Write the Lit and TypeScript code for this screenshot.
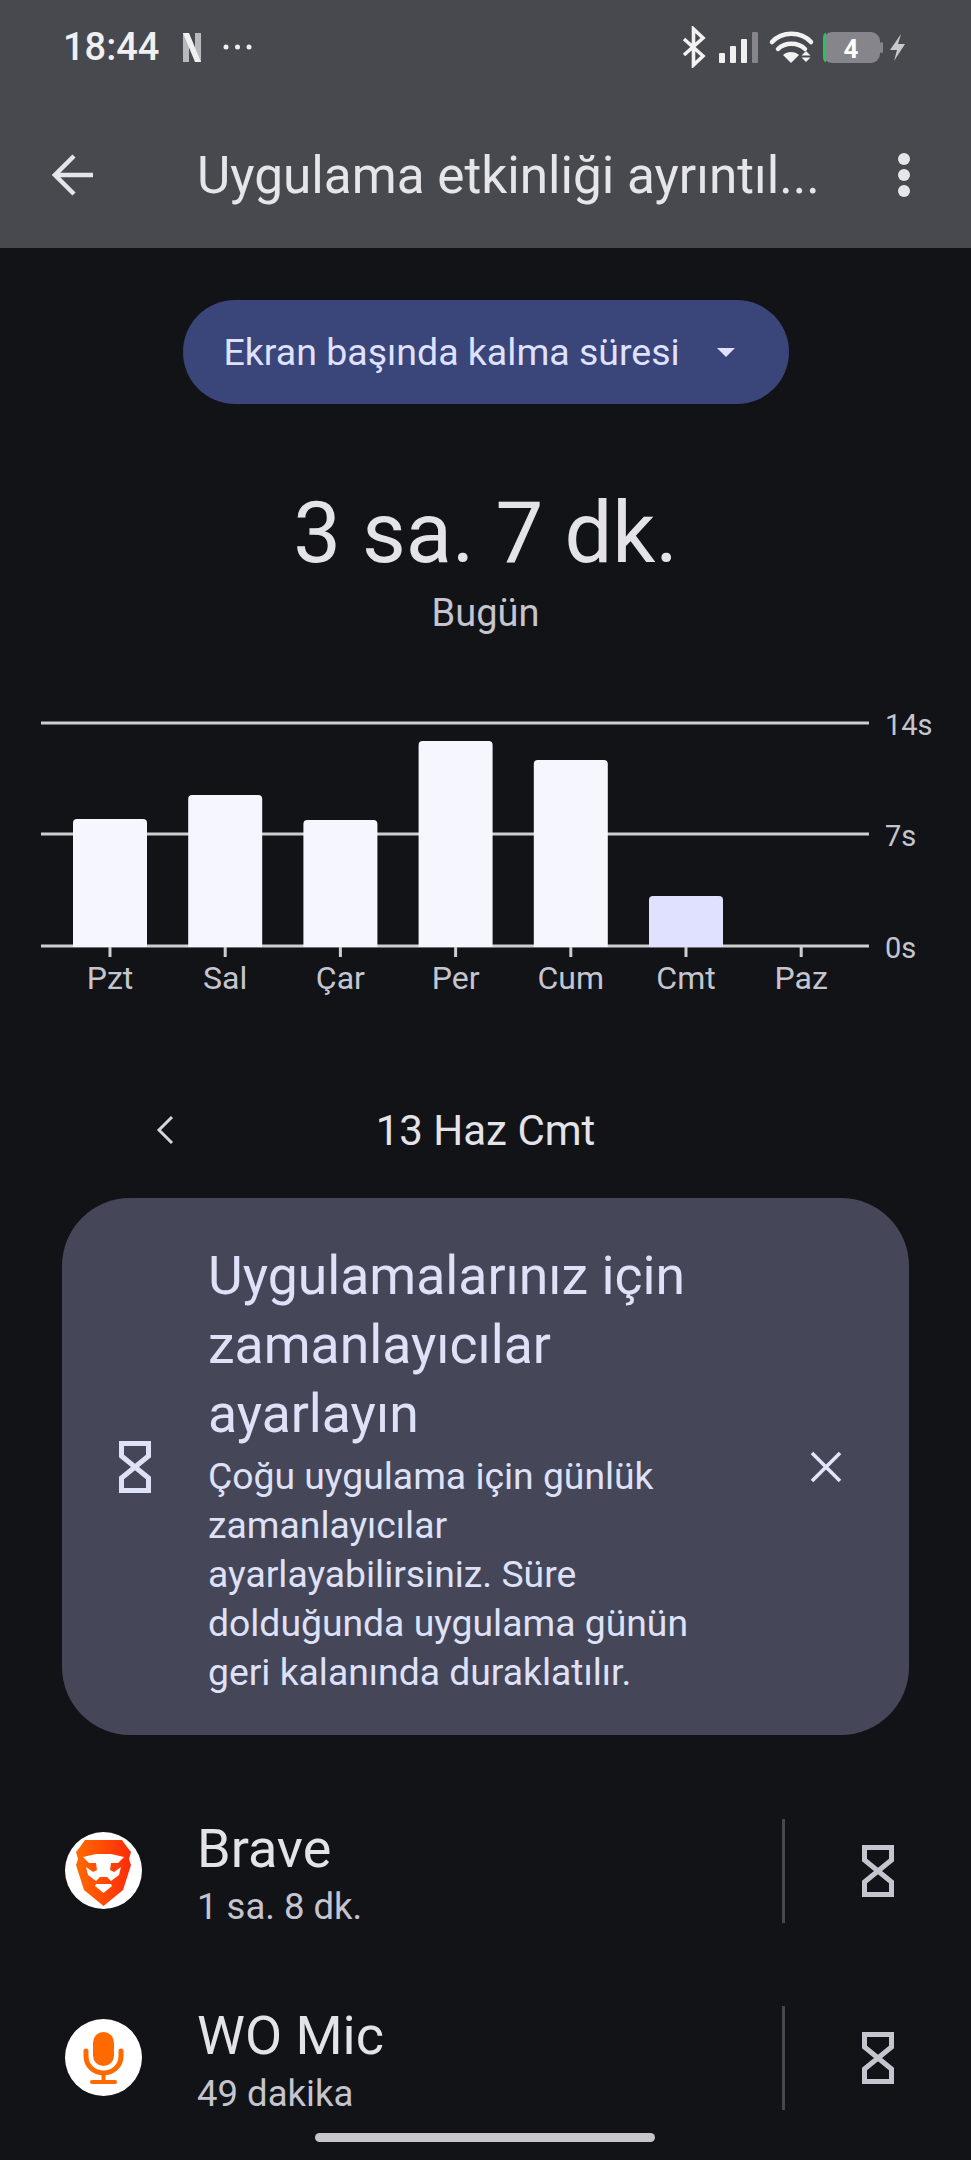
import { LitElement, html, css, svg } from 'lit';
import { customElement } from 'lit/decorators.js';

interface AppUsage {
  name: string;
  time: string;
  icon: 'brave' | 'mic';
}

const BARS = [
  { day: 'Pzt', top: 819 },
  { day: 'Sal', top: 795 },
  { day: 'Çar', top: 820 },
  { day: 'Per', top: 741 },
  { day: 'Cum', top: 760 },
  { day: 'Cmt', top: 896, current: true },
  { day: 'Paz', top: 946 },
];

const APPS: AppUsage[] = [
  { name: 'Brave', time: '1 sa. 8 dk.', icon: 'brave' },
  { name: 'WO Mic', time: '49 dakika', icon: 'mic' },
];

// chart svg starts at y=700 of the page
const CHART_TOP = 700;
const BAR_WIDTH = 74;
const STEP = 115.2;

const hourglass = html`<svg class="hourglass" viewBox="0 0 32 52" width="32" height="52">
  <path d="M2.5 2.5H29.5V15L2.5 37V49.5H29.5V37L2.5 15Z" fill="none" stroke="currentColor" stroke-width="5" />
</svg>`;

const braveIcon = html`<svg class="app-icon" viewBox="0 0 77 77" width="77" height="77">
  <defs>
    <linearGradient id="brave-grad" x1="0" y1="0" x2="1" y2="0">
      <stop offset="0" stop-color="#ff6a00" />
      <stop offset="1" stop-color="#ff2b0a" />
    </linearGradient>
  </defs>
  <circle cx="38.5" cy="38.5" r="38.5" fill="#fff" />
  <path d="M20 8H57L62 15L66 20L64 27L66 33L58 58L38.5 74L19 58L11 33L13 27L11 20L15 15Z" fill="url(#brave-grad)" />
  <path
    d="M18 25L31 22H46L59 25L53 31H46L45 38L49 40L56 35L54 43L46 49L42 45H35L31 49L23 43L21 35L28 40L32 38L31 31H24Z"
    fill="#fff"
  />
  <path d="M31 52H46L47 54L38.5 61L30 54Z" fill="#fff" />
</svg>`;

const micIcon = html`<svg class="app-icon" viewBox="0 0 77 77" width="77" height="77">
  <circle cx="38.5" cy="38.5" r="38.5" fill="#fff" />
  <rect x="28" y="13" width="21" height="34" rx="10.5" fill="#ff6a00" />
  <path d="M21 32V37C21 47 29 54 38.5 54S56 47 56 37V32" fill="none" stroke="#ff6a00" stroke-width="5" stroke-linecap="round" />
  <path d="M38.5 54V63" stroke="#ff6a00" stroke-width="4" />
  <rect x="25" y="61" width="27" height="4" rx="2" fill="#ff6a00" />
</svg>`;

@customElement('app-root')
export class AppRoot extends LitElement {
  private _statusBar() {
    return html`<div class="status">
      <span class="clock">18:44</span>
      <svg class="netflix" viewBox="0 0 18 29" width="18" height="29">
        <rect x="0" width="6" height="29" fill="#b9b9bd" />
        <rect x="12" width="6" height="29" fill="#b9b9bd" />
        <path d="M0 0H6L18 29H12Z" fill="#f0f0f0" />
      </svg>
      <svg class="dots" viewBox="0 0 29 6" width="29" height="6">
        <circle cx="3" cy="3" r="2.5" fill="#eee" />
        <circle cx="14.5" cy="3" r="2.5" fill="#eee" />
        <circle cx="26" cy="3" r="2.5" fill="#eee" />
      </svg>
      <svg class="status-icons" viewBox="680 25 230 42" width="230" height="42">
        <path d="M684 38L703 55L693.5 64V28L703 37L684 54" fill="none" stroke="#f2f2f2" stroke-width="3.6" />
        <rect x="719" y="52" width="6" height="10" rx="1" fill="#f0f0f0" />
        <rect x="730" y="45" width="6" height="17" rx="1" fill="#f0f0f0" />
        <rect x="741" y="38" width="6" height="24" rx="1" fill="#f0f0f0" />
        <rect x="752" y="31" width="6" height="31" rx="1" fill="#85858b" />
        <path d="M772 41C782 30 801 30 811 41" fill="none" stroke="#f2f2f2" stroke-width="4.5" stroke-linecap="round" />
        <path d="M778 48C785 41 798 41 805 48" fill="none" stroke="#f2f2f2" stroke-width="4.5" stroke-linecap="round" />
        <path d="M783 54C787 50 795 50 799 54L791 62Z" fill="#f2f2f2" />
        <path d="M806 50L810.5 54.500H801.500Z" fill="#f2f2f2" />
        <path d="M801.500 56.500H810.500L806 61Z" fill="#f2f2f2" />
        <rect x="823" y="31" width="57" height="31" rx="9" fill="#85858b" />
        <rect x="880" y="41" width="3" height="11" rx="1.500" fill="#85858b" />
        <path d="M826 31.500C823 33 823 35 823 40V53C823 58 823 60 826 61.500Z" fill="#22c55e" />
        <text x="851" y="57" text-anchor="middle" class="batt">4</text>
        <path d="M901 33L890 49H897L894 60L905 43H898Z" fill="#c9c9cc" />
      </svg>
    </div>`;
  }

  private _chart() {
    const y = (v: number) => v - CHART_TOP;
    return html`<svg class="chart" viewBox="0 0 971 300" width="971" height="300" role="img" aria-label="Ekran süresi">
      ${[723, 834, 946].map(
        (ly) => svg`<rect x="41" y="${y(ly) - 1.5}" width="828" height="3" fill="#cfcfd2" />`
      )}
      ${BARS.map((b, i) => {
        const cx = 110 + i * STEP;
        return svg`
          <rect x="${cx}" y="${y(946)}" width="3" height="11" transform="translate(-1.5 0)" fill="#cfcfd2" />
          ${b.top < 946
            ? svg`<path d="M${cx - BAR_WIDTH / 2} ${y(947)}V${y(b.top) + 4}q0 -4 4 -4H${cx + BAR_WIDTH / 2 - 4}q4 0 4 4V${y(947)}Z"
                fill="${b.current ? '#e0e0ff' : '#f6f6ff'}" />`
            : ''}
          <text x="${cx}" y="${y(989)}" text-anchor="middle" class="axis day">${b.day}</text>
        `;
      })}
      <text x="885" y="${y(735)}" class="axis">14s</text>
      <text x="885" y="${y(846)}" class="axis">7s</text>
      <text x="885" y="${y(958)}" class="axis">0s</text>
    </svg>`;
  }

  render() {
    return html`
      <header>
        ${this._statusBar()}
        <div class="toolbar">
          <svg class="back" viewBox="0 0 42 42" width="42" height="42">
            <path d="M41 21H3M22 2L3 21L22 40" fill="none" stroke="#e6e6ea" stroke-width="4.500" />
          </svg>
          <h1>Uygulama etkinliği ayrıntıl...</h1>
          <svg class="more" viewBox="0 0 12 44" width="12" height="44">
            <circle cx="6" cy="6" r="6" fill="#e6e6ea" />
            <circle cx="6" cy="22" r="6" fill="#e6e6ea" />
            <circle cx="6" cy="38" r="6" fill="#e6e6ea" />
          </svg>
        </div>
      </header>

      <main>
        <div class="picker">
          <span>Ekran başında kalma süresi</span>
          <i class="caret"></i>
        </div>
        <div class="total">3 sa. 7 dk.</div>
        <div class="today">Bugün</div>

        ${this._chart()}

        <div class="date">
          <svg class="chev" viewBox="0 0 18 30" width="18" height="30">
            <path d="M16 2L3 15L16 28" fill="none" stroke="#d5d5dc" stroke-width="3" />
          </svg>
          <span>13 Haz Cmt</span>
        </div>

        <section class="card">
          ${hourglass}
          <div class="card-text">
            <h2>Uygulamalarınız için zamanlayıcılar ayarlayın</h2>
            <p>Çoğu uygulama için günlük zamanlayıcılar ayarlayabilirsiniz. Süre dolduğunda uygulama günün geri kalanında duraklatılır.</p>
          </div>
          <svg class="close" viewBox="0 0 32 32" width="32" height="32">
            <path d="M2 2L30 30M30 2L2 30" fill="none" stroke="#e4e5fa" stroke-width="3.600" />
          </svg>
        </section>

        <div class="rows">
          ${APPS.map(
            (a) => html`<div class="row">
              ${a.icon === 'brave' ? braveIcon : micIcon}
              <div class="row-text">
                <div class="name">${a.name}</div>
                <div class="time">${a.time}</div>
              </div>
              <div class="divider"></div>
              ${hourglass}
            </div>`
          )}
        </div>
      </main>
      <div class="gesture"></div>
    `;
  }

  static styles = css`
    :host {
      display: block;
      position: relative;
      width: 971px;
      height: 2160px;
      overflow: hidden;
      background: #121317;
      font-family: Roboto, 'Noto Sans', sans-serif;
    }
    header {
      height: 248px;
      background: #48484f;
      box-sizing: border-box;
    }
    .status {
      height: 94px;
      display: flex;
      align-items: center;
      padding-left: 63px;
      box-sizing: border-box;
    }
    .clock {
      font-size: 38px;
      font-weight: 500;
      color: #f0f0f0;
      width: 120px;
    }
    .netflix {
      flex: none;
    }
    .dots {
      margin-left: 22px;
      flex: none;
    }
    .status-icons {
      margin-left: auto;
      margin-right: 61px;
      flex: none;
    }
    .batt {
      font: 700 26px Roboto, sans-serif;
      fill: #fff;
    }
    .toolbar {
      height: 154px;
      padding-top: 8px;
      box-sizing: border-box;
      display: flex;
      align-items: center;
      padding-left: 52px;
    }
    .toolbar h1 {
      margin: 0 0 0 103px;
      font-size: 51.3px;
      font-weight: 400;
      color: #e6e6ea;
      white-space: nowrap;
      width: 676px;
      flex: none;
    }
    .more {
      margin-left: 25px;
      flex: none;
    }
    main {
      display: flex;
      flex-direction: column;
      align-items: center;
      padding-top: 52px;
    }
    .picker {
      width: 606px;
      height: 104px;
      box-sizing: border-box;
      border-radius: 52px;
      background: #3a4579;
      color: #dfe1ff;
      display: flex;
      align-items: center;
      padding-left: 41px;
      font-size: 37.5px;
      font-weight: 400;
    }
    .caret {
      margin-left: 37px;
      border-left: 9px solid transparent;
      border-right: 9px solid transparent;
      border-top: 9px solid #dfe1ff;
    }
    .total {
      margin-top: 71px;
      font-size: 85px;
      line-height: 116px;
      font-weight: 400;
      color: #e3e3e8;
    }
    .today {
      margin-top: -3px;
      font-size: 38px;
      line-height: 50px;
      font-weight: 400;
      color: #c5c5d0;
    }
    .chart {
      display: block;
      margin-top: 62px;
    }
    .axis {
      font: 400 29px Roboto, sans-serif;
      fill: #c5c5d0;
    }
    .axis.day {
      font-size: 32px;
    }
    .date {
      margin-top: 100px;
      align-self: stretch;
      height: 60px;
      display: flex;
      align-items: center;
      position: relative;
      justify-content: center;
      font-size: 42px;
      color: #e3e3e8;
    }
    .chev {
      position: absolute;
      left: 156px;
      top: 15px;
    }
    .card {
      margin-top: 38px;
      width: 847px;
      height: 537px;
      box-sizing: border-box;
      border-radius: 68px;
      background: #454759;
      color: #dfe1f9;
      display: flex;
      align-items: center;
      padding-left: 57px;
    }
    .card .hourglass {
      flex: none;
    }
    .card-text {
      margin-left: 57px;
      margin-top: 5px;
      width: 510px;
      flex: none;
    }
    .card-text h2 {
      margin: 0;
      font-size: 53.5px;
      line-height: 69px;
      font-weight: 400;
    }
    .card-text p {
      margin: 4px 0 0;
      font-size: 37.3px;
      line-height: 49px;
      font-weight: 400;
    }
    .close {
      margin-left: 92px;
      flex: none;
    }
    .rows {
      align-self: stretch;
      margin-top: 42px;
    }
    .row {
      height: 187px;
      display: flex;
      align-items: center;
      padding-left: 65px;
      color: #c5c5d0;
    }
    .app-icon {
      flex: none;
    }
    .row-text {
      margin-left: 55px;
      flex: 1;
      padding-top: 14px;
    }
    .name {
      font-size: 54px;
      line-height: 58px;
      font-weight: 400;
      color: #e3e3e8;
    }
    .time {
      font-size: 36.5px;
      line-height: 58px;
      font-weight: 400;
      color: #c5c5d0;
    }
    .divider {
      width: 3px;
      height: 104px;
      background: #47484e;
      margin-right: 77px;
    }
    .row .hourglass {
      margin-right: 77px;
    }
    .gesture {
      position: absolute;
      left: 315px;
      top: 2133px;
      width: 340px;
      height: 9px;
      border-radius: 5px;
      background: #c6c6c8;
    }
  `;
}
